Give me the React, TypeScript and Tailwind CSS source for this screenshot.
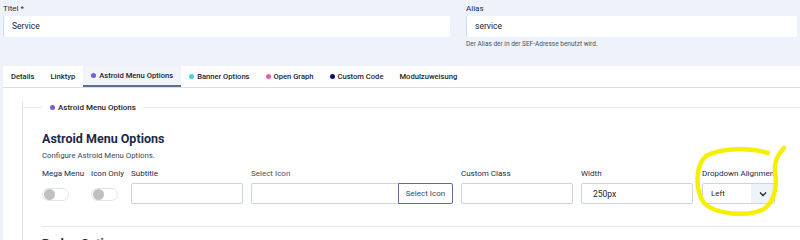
import React from 'react';

const font = { fontFamily: 'Roboto, "Liberation Sans", sans-serif' };

function Field({ label, children, w }: { label: string; children: React.ReactNode; w: string }) {
  return (
    <div className={`flex flex-col ${w}`}>
      <div className="text-[8px] text-[#1a2a50] h-[10px] leading-[10px] mb-[4px] whitespace-nowrap">{label}</div>
      {children}
    </div>
  );
}

function Toggle() {
  return (
    <div className="mt-[5px] w-[27px] h-[13px] rounded-full border border-[#dfe5ee] bg-white flex items-center px-[1px]">
      <div className="w-[11px] h-[11px] rounded-full bg-[#c0c0c0]" />
    </div>
  );
}

function Input({ value, className = '' }: { value?: string; className?: string }) {
  return (
    <div className={`h-[21px] border border-[#c9d4e4] rounded-[2px] bg-white text-[8.5px] text-[#22262a] flex items-center px-[11px] ${className}`}>
      {value}
    </div>
  );
}

function Tab({ label, dot, active }: { label: string; dot?: string; active?: boolean }) {
  return (
    <div
      className={`h-full flex items-center gap-[3px] px-[8px] text-[7.6px] font-medium text-[#22262a] whitespace-nowrap ${
        active ? 'bg-[#f1f4f9] border-b-2 border-[#5d7194] text-[#3a4a6a]' : ''
      }`}
    >
      {dot && <span className={`w-[5px] h-[5px] rounded-full ${dot}`} />}
      {label}
    </div>
  );
}

export default function App() {
  return (
    <div className="w-[800px] h-[240px] overflow-hidden bg-[#eef3fb] relative" style={font}>
      <div className="flex gap-[16px] px-[3px] pt-[4px]">
        <div className="w-[447px]">
          <div className="text-[8px] text-[#1a2a50] h-[10px] leading-[10px] mb-[2px]">Titel *</div>
          <div className="h-[21px] bg-white border-l border-[#d2dbe8] rounded-[2px] text-[8.5px] text-[#22262a] flex items-center px-[8px]">
            Service
          </div>
        </div>
        <div className="flex-1">
          <div className="text-[8px] text-[#1a2a50] h-[10px] leading-[10px] mb-[2px]">Alias</div>
          <div className="h-[21px] bg-white border-l border-[#d2dbe8] rounded-l-[2px] text-[8.5px] text-[#22262a] flex items-center px-[8px]">
            service
          </div>
          <div className="text-[6.5px] text-[#4a5260] mt-[3px]">Der Alias der in der SEF-Adresse benutzt wird.</div>
        </div>
      </div>

      <div className="ml-[3px] mt-[16px] bg-white">
        <div className="h-[22px] flex items-stretch border-b border-[#d6e0ec]">
          <Tab label="Details" />
          <Tab label="Linktyp" />
          <Tab label="Astroid Menu Options" dot="bg-[#6f63d4]" active />
          <Tab label="Banner Options" dot="bg-[#3fd8d8]" />
          <Tab label="Open Graph" dot="bg-[#ee5ba6]" />
          <Tab label="Custom Code" dot="bg-[#0b0b80]" />
          <Tab label="Modulzuweisung" />
        </div>

        <div className="pl-[19px] pt-[20px] h-[200px]">
          <div className="border-l border-[#d7e1ee] h-full">
            <div className="flex items-center -mt-[6px]">
              <div className="w-[20px] h-px bg-[#e6ebf2]" />
              <div className="flex items-center gap-[3px] px-[7px] text-[8px] font-medium text-[#22262a]">
                <span className="w-[5px] h-[5px] rounded-full bg-[#6f63d4]" />
                Astroid Menu Options
              </div>
              <div className="flex-1 h-px bg-[#e6ebf2]" />
            </div>

            <div className="pl-[19px] pt-[18px]">
              <div className="text-[12.5px] font-bold text-[#1c2a48] leading-[14px]">Astroid Menu Options</div>
              <div className="text-[7.8px] text-[#3c4452] mt-[4px]">Configure Astroid Menu Options.</div>

              <div className="flex mt-[8px]">
                <Field label="Mega Menu" w="w-[49px]">
                  <Toggle />
                </Field>
                <Field label="Icon Only" w="w-[40px]">
                  <Toggle />
                </Field>
                <Field label="Subtitle" w="w-[120px]">
                  <Input className="w-[112px]" />
                </Field>
                <div className="flex flex-col w-[210px]">
                  <div className="text-[8px] text-[#4a5260] h-[10px] leading-[10px] mb-[4px]">Select Icon</div>
                  <div className="flex h-[21px] w-[202px]">
                    <div className="flex-1 border border-r-0 border-[#c9d4e4] rounded-l-[2px]" />
                    <div className="w-[55px] border border-[#5b7092] rounded-r-[2px] text-[8px] text-[#3a4a6a] flex items-center justify-center">
                      Select Icon
                    </div>
                  </div>
                </div>
                <Field label="Custom Class" w="w-[120px]">
                  <Input className="w-[112px]" />
                </Field>
                <Field label="Width" w="w-[121px]">
                  <Input value="250px" className="w-[112px]" />
                </Field>
                <Field label="Dropdown Alignment" w="w-[80px]">
                  <div className="h-[21px] w-[73px] border border-[#c9d4e4] rounded-[2px] flex text-[8px] text-[#22262a]">
                    <div className="flex-1 flex items-center pl-[8px]">Left</div>
                    <div className="w-[23px] bg-[#eef3fa] flex items-center justify-center">
                      <svg width="8" height="6" viewBox="0 0 8 6" fill="none">
                        <path d="M1 1.5 L4 4.5 L7 1.5" stroke="#22262a" strokeWidth="1.3" />
                      </svg>
                    </div>
                  </div>
                </Field>
              </div>

              <div className="mt-[22px] h-px bg-[#e2e6ec]" />
              <div className="text-[12.5px] font-bold text-[#1c2a48] mt-[8px]">Badge Options</div>
            </div>
          </div>
        </div>
      </div>

      <svg className="absolute left-0 top-0 pointer-events-none" width="800" height="240" viewBox="0 0 800 240" fill="none">
        <path
          d="M768 153 C750 147 720 148 706 156 C695 166 695 190 704 203 C716 215 748 217 764 209 C775 201 777 186 775 171 C774 162 778 154 784 148"
          stroke="#f5f000"
          strokeWidth="4.5"
          strokeLinecap="round"
        />
      </svg>
    </div>
  );
}
